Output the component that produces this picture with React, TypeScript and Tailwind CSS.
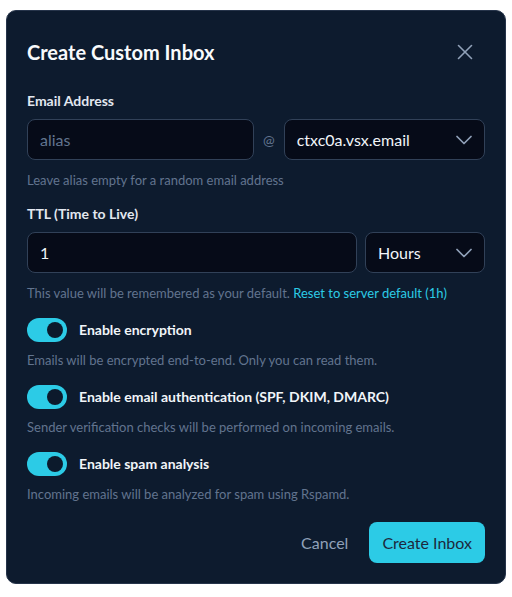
import { useState } from "react";
import { X, ChevronDown } from "lucide-react";

type ToggleRowProps = {
  label: string;
  hint: string;
  checked: boolean;
  onChange: () => void;
};

function ToggleRow({ label, hint, checked, onChange }: ToggleRowProps) {
  return (
    <div>
      <div className="flex items-center gap-3">
        <button
          onClick={onChange}
          className={`relative h-6 w-10 shrink-0 rounded-full transition-colors ${checked ? "bg-[#2ccbe6]" : "bg-slate-700"}`}
        >
          <span
            className={`absolute top-1 h-4 w-4 rounded-full bg-[#0c1a2c] transition-all ${checked ? "left-5" : "left-1"}`}
          />
        </button>
        <span className="text-sm font-bold text-slate-100">{label}</span>
      </div>
      <p className="mt-[10px] text-[13px] leading-4 text-slate-500">{hint}</p>
    </div>
  );
}

export default function App() {
  const [alias, setAlias] = useState("");
  const [ttl, setTtl] = useState("1");
  const [encrypt, setEncrypt] = useState(true);
  const [auth, setAuth] = useState(true);
  const [spam, setSpam] = useState(true);

  return (
    <div
      className="min-h-screen bg-white pl-[6px] pt-[10px]"
      style={{ fontFamily: "Lato, 'Open Sans', sans-serif" }}
    >
      <div className="w-[500px] rounded-[10px] border border-[#26344a] bg-[#0d1b2e] px-5 pb-5 pt-[27px]">
        {/* Header */}
        <div className="flex items-center justify-between">
          <h2 className="text-xl font-bold leading-7 text-slate-50">Create Custom Inbox</h2>
          <button className="mr-[7px] text-slate-400 hover:text-slate-200">
            <X size={26} strokeWidth={1.5} />
          </button>
        </div>

        {/* Email address */}
        <label className="mt-[25px] block text-sm font-bold leading-5 text-slate-200">Email Address</label>
        <div className="mt-2 flex items-center gap-[9px]">
          <input
            value={alias}
            onChange={(e) => setAlias(e.target.value)}
            placeholder="alias"
            className="h-[41px] w-[227px] rounded-lg border border-slate-700 bg-[#060b18] px-3 text-base text-slate-100 outline-none placeholder:text-slate-500"
          />
          <span className="text-sm text-slate-500">@</span>
          <div className="flex h-[41px] flex-1 items-center justify-between rounded-lg border border-slate-700 bg-[#060b18] pl-3 pr-[6px]">
            <span className="text-base text-slate-100">ctxc0a.vsx.email</span>
            <ChevronDown size={28} strokeWidth={1.5} className="text-slate-400" />
          </div>
        </div>
        <p className="mt-3 text-[13px] leading-4 text-slate-500">Leave alias empty for a random email address</p>

        {/* TTL */}
        <label className="mt-4 block text-sm font-bold leading-5 text-slate-200">TTL (Time to Live)</label>
        <div className="mt-2 flex items-center gap-2">
          <input
            value={ttl}
            onChange={(e) => setTtl(e.target.value)}
            className="h-[41px] flex-1 rounded-lg border border-slate-700 bg-[#060b18] px-3 text-base text-slate-100 outline-none"
          />
          <div className="flex h-[41px] w-[120px] items-center justify-between rounded-lg border border-slate-700 bg-[#060b18] pl-3 pr-[6px]">
            <span className="text-base text-slate-100">Hours</span>
            <ChevronDown size={28} strokeWidth={1.5} className="text-slate-400" />
          </div>
        </div>
        <p className="mt-3 text-[13px] leading-4 text-slate-500">
          This value will be remembered as your default.{" "}
          <button className="text-[#2ccbe6] hover:underline">Reset to server default (1h)</button>
        </p>

        {/* Options */}
        <div className="mt-[17px] flex flex-col gap-[17px]">
          <ToggleRow
            label="Enable encryption"
            hint="Emails will be encrypted end-to-end. Only you can read them."
            checked={encrypt}
            onChange={() => setEncrypt(!encrypt)}
          />
          <ToggleRow
            label="Enable email authentication (SPF, DKIM, DMARC)"
            hint="Sender verification checks will be performed on incoming emails."
            checked={auth}
            onChange={() => setAuth(!auth)}
          />
          <ToggleRow
            label="Enable spam analysis"
            hint="Incoming emails will be analyzed for spam using Rspamd."
            checked={spam}
            onChange={() => setSpam(!spam)}
          />
        </div>

        {/* Footer */}
        <div className="mt-5 flex items-center justify-end gap-[21px]">
          <button className="text-base text-slate-400 hover:text-slate-200">Cancel</button>
          <button className="h-[41px] rounded-lg bg-[#2ccbe6] px-[13px] text-base text-slate-800 hover:bg-cyan-300">
            Create Inbox
          </button>
        </div>
      </div>
    </div>
  );
}
